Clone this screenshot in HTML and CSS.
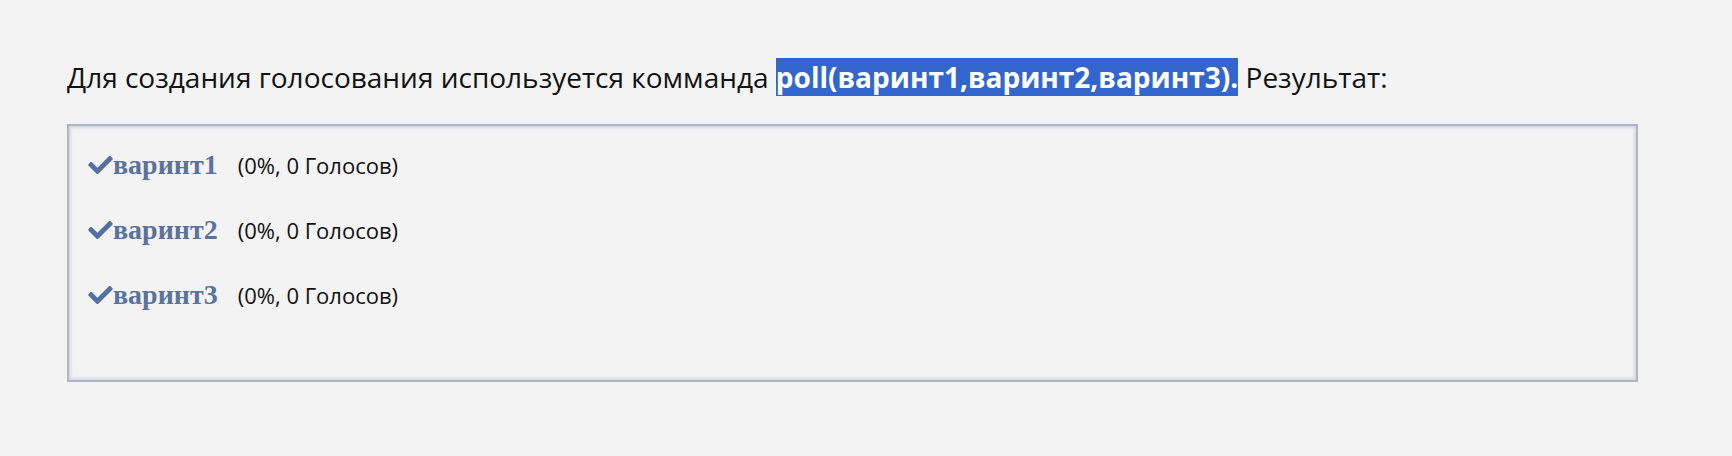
FILE: index.html
```html
<!DOCTYPE html>
<html lang="ru">
<head>
    <meta charset="UTF-8">
    <meta name="viewport" content="width=device-width, initial-scale=1.0">
    <title>Голосование</title>
<link rel="stylesheet" href="styles.css">
</head>
  <body>
  <div class="page">
    <p class="intro">Для создания голосования используется комманда <b class="code">poll(варинт1,варинт2,варинт3).</b> Результат:</p>
    <div class="poll">
      <div class="poll_row">
        <svg class="check" viewBox="0 68 512 376"><path d="M173.9 439.4l-166.4-166.4c-10-10-10-26.2 0-36.2l36.2-36.2c10-10 26.2-10 36.2 0L192 312.7 432.1 72.6c10-10 26.2-10 36.2 0l36.2 36.2c10 10 10 26.2 0 36.2l-294.4 294.4c-10 10-26.2 10-36.2 0z"/></svg>
        <span class="option">варинт1</span>
        <span class="votes">(0%, 0 Голосов)</span>
      </div>
      <div class="poll_row">
        <svg class="check" viewBox="0 68 512 376"><path d="M173.9 439.4l-166.4-166.4c-10-10-10-26.2 0-36.2l36.2-36.2c10-10 26.2-10 36.2 0L192 312.7 432.1 72.6c10-10 26.2-10 36.2 0l36.2 36.2c10 10 10 26.2 0 36.2l-294.4 294.4c-10 10-26.2 10-36.2 0z"/></svg>
        <span class="option">варинт2</span>
        <span class="votes">(0%, 0 Голосов)</span>
      </div>
      <div class="poll_row">
        <svg class="check" viewBox="0 68 512 376"><path d="M173.9 439.4l-166.4-166.4c-10-10-10-26.2 0-36.2l36.2-36.2c10-10 26.2-10 36.2 0L192 312.7 432.1 72.6c10-10 26.2-10 36.2 0l36.2 36.2c10 10 10 26.2 0 36.2l-294.4 294.4c-10 10-26.2 10-36.2 0z"/></svg>
        <span class="option">варинт3</span>
        <span class="votes">(0%, 0 Голосов)</span>
      </div>
    </div>
  </div>
  </body>
</html>
```

FILE: styles.css
```css
body {
  margin: 0;
  background: #f3f3f3;
  font-family: "Open Sans", sans-serif;
  color: #111;
}
.page {
  padding: 57px 94px 0 67px;
}
.intro {
  margin: 0 0 27px;
  font-size: 28px;
  line-height: 40px;
}
.code {
  background: #3366cc;
  color: #fff;
}
.poll {
  border: 2px solid #b0b5c4;
  box-shadow: inset 2px 2px 3px #d5d8e0, inset -2px -2px 3px #d5d8e0;
  padding: 6px 19px 54px;
  height: 194px;
}
.poll_row {
  display: flex;
  align-items: center;
  height: 65px;
}
.check {
  width: 25px;
  height: 18px;
  fill: #5570a0;
}
.option {
  font-family: "Liberation Serif", serif;
  font-weight: bold;
  font-size: 28px;
  color: #5a72a0;
}
.votes {
  margin-left: 20px;
  font-size: 22px;
}
```
